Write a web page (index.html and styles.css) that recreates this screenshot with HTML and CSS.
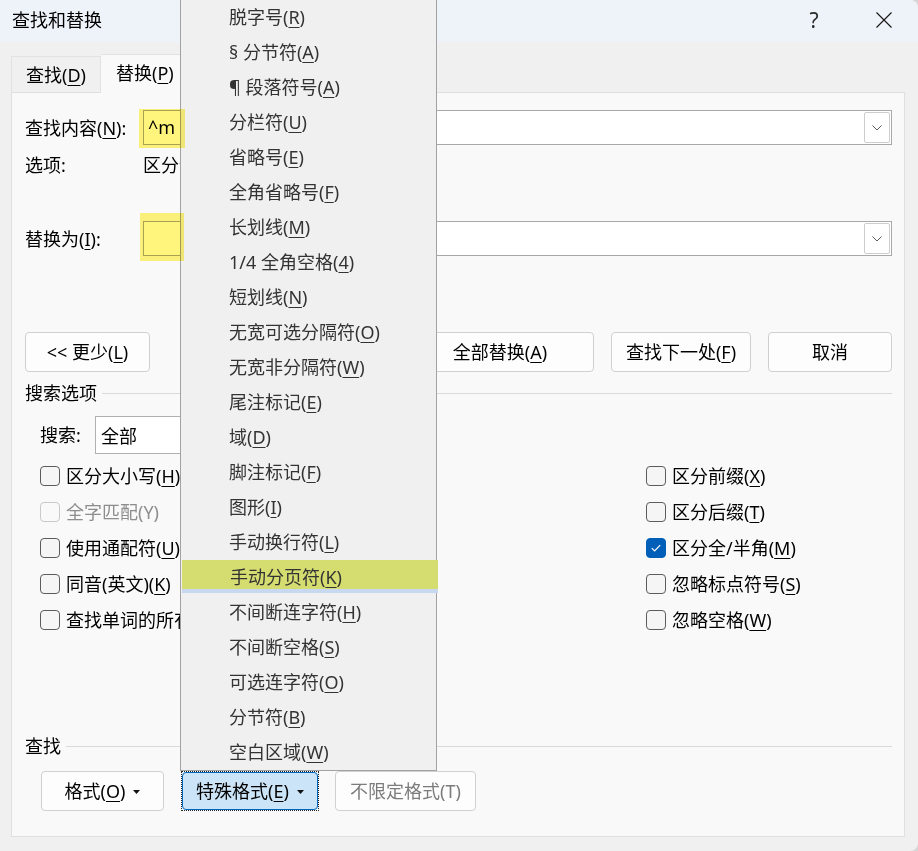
FILE: index.html
```html
<!DOCTYPE html>
<html lang="zh-CN">
<head>
<meta charset="utf-8">
<title>查找和替换</title>
<link rel="stylesheet" href="styles.css">
</head>
<body>
<div class="window">
  <header class="titlebar">
    <span class="title">查找和替换</span>
    <div class="caption">
      <span class="cap-btn help">?</span>
      <span class="cap-btn close">
        <svg width="16" height="16" viewBox="0 0 16 16"><path d="M0.5 0.5 L15.5 15.5 M15.5 0.5 L0.5 15.5" stroke="#1a1a1a" stroke-width="1.2" fill="none"/></svg>
      </span>
    </div>
  </header>

  <div class="tabs">
    <div class="tab">查找(<u>D</u>)</div>
    <div class="tab active">替换(<u>P</u>)</div>
  </div>

  <section class="panel">
    <div class="field-row">
      <span class="field-label">查找内容(<u>N</u>):</span>
      <div class="combo">
        <span class="combo-text">^m</span>
        <span class="combo-btn"><svg width="10" height="6" viewBox="0 0 10 6"><path d="M0.5 0.5 L5 5 L9.5 0.5" stroke="#5a5a5a" stroke-width="1" fill="none"/></svg></span>
      </div>
    </div>

    <div class="opt-row">
      <span class="field-label">选项:</span>
      <span class="opt-value">区分全/半角</span>
    </div>

    <div class="field-row replace-row">
      <span class="field-label">替换为(<u>I</u>):</span>
      <div class="combo">
        <span class="combo-text"></span>
        <span class="combo-btn"><svg width="10" height="6" viewBox="0 0 10 6"><path d="M0.5 0.5 L5 5 L9.5 0.5" stroke="#5a5a5a" stroke-width="1" fill="none"/></svg></span>
      </div>
    </div>

    <div class="btn-row">
      <button class="btn btn-less">&lt;&lt; 更少(<u>L</u>)</button>
      <div class="btn-group">
        <button class="btn btn-all">全部替换(<u>A</u>)</button>
        <button class="btn btn-std">查找下一处(<u>F</u>)</button>
        <button class="btn btn-cancel">取消</button>
      </div>
    </div>

    <div class="group-head">搜索选项</div>

    <div class="search-row">
      <span class="search-label">搜索:</span>
      <div class="select">
        <span>全部</span>
        <svg width="10" height="6" viewBox="0 0 10 6"><path d="M0.5 0.5 L5 5 L9.5 0.5" stroke="#5a5a5a" stroke-width="1" fill="none"/></svg>
      </div>
    </div>

    <div class="checks">
      <label class="check clip"><span class="box"></span><span class="lbl">区分大小写(<u>H</u>)</span></label>
      <label class="check clip disabled"><span class="box"></span><span class="lbl">全字匹配(Y)</span></label>
      <label class="check clip"><span class="box"></span><span class="lbl">使用通配符(<u>U</u>)</span></label>
      <label class="check clip"><span class="box"></span><span class="lbl">同音(英文)(<u>K</u>)</span></label>
      <label class="check clip"><span class="box"></span><span class="lbl">查找单词的所有形式(英文)(<u>W</u>)</span></label>
      <label class="check"><span class="box"></span><span class="lbl">区分前缀(<u>X</u>)</span></label>
      <label class="check"><span class="box"></span><span class="lbl">区分后缀(<u>T</u>)</span></label>
      <label class="check checked"><span class="box"><svg width="20" height="20" viewBox="0 0 20 20"><path d="M5.8 10.2 L8.6 13 L14.2 7.2" stroke="#fff" stroke-width="1.2" fill="none"/></svg></span><span class="lbl">区分全/半角(<u>M</u>)</span></label>
      <label class="check"><span class="box"></span><span class="lbl">忽略标点符号(<u>S</u>)</span></label>
      <label class="check"><span class="box"></span><span class="lbl">忽略空格(<u>W</u>)</span></label>
    </div>

    <div class="group-head find-head">查找</div>

    <div class="bottom-row">
      <button class="btn btn-format">格式(<u>O</u>)<svg class="caret" width="7" height="4" viewBox="0 0 7 4"><path d="M0 0 H7 L3.5 4 Z" fill="#111"/></svg></button>
      <span class="focus-ring">
        <button class="btn btn-special">特殊格式(<u>E</u>)<svg class="caret" width="7" height="4" viewBox="0 0 7 4"><path d="M0 0 H7 L3.5 4 Z" fill="#111"/></svg></button>
      </span>
      <button class="btn btn-noformat" disabled>不限定格式(T)</button>
    </div>
  </section>

  <ul class="menu">
    <li>脱字号(<u>R</u>)</li>
    <li>§ 分节符(<u>A</u>)</li>
    <li>¶ 段落符号(<u>A</u>)</li>
    <li>分栏符(<u>U</u>)</li>
    <li>省略号(<u>E</u>)</li>
    <li>全角省略号(<u>F</u>)</li>
    <li>长划线(<u>M</u>)</li>
    <li>1/4 全角空格(<u>4</u>)</li>
    <li>短划线(<u>N</u>)</li>
    <li>无宽可选分隔符(<u>O</u>)</li>
    <li>无宽非分隔符(<u>W</u>)</li>
    <li>尾注标记(<u>E</u>)</li>
    <li>域(<u>D</u>)</li>
    <li>脚注标记(<u>F</u>)</li>
    <li>图形(<u>I</u>)</li>
    <li>手动换行符(<u>L</u>)</li>
    <li class="current">手动分页符(<u>K</u>)</li>
    <li>不间断连字符(<u>H</u>)</li>
    <li>不间断空格(<u>S</u>)</li>
    <li>可选连字符(<u>O</u>)</li>
    <li>分节符(<u>B</u>)</li>
    <li>空白区域(<u>W</u>)</li>
  </ul>

  <div class="marker marker-find"></div>
  <div class="marker marker-replace"></div>
</div>
</body>
</html>
```

FILE: styles.css
```css
* { box-sizing: border-box; }

html, body {
  margin: 0;
  padding: 0;
  background: #d6d6d6;
}

body {
  font-family: "Noto Sans", "Noto Sans CJK SC", sans-serif;
  font-size: 18px;
  color: #000;
}

u {
  text-decoration-thickness: 1px;
  text-underline-offset: 3px;
}

.window {
  position: relative;
  width: 918px;
  height: 851px;
  background: #f0f0f0;
  border-radius: 0 8px 8px 0;
  overflow: hidden;
  display: flex;
  flex-direction: column;
}

/* ---- title bar ---- */
.titlebar {
  flex: none;
  height: 42px;
  background: #eef2f9;
  display: flex;
  align-items: center;
  padding-left: 12px;
}

.title {
  flex: 1;
  line-height: 26px;
  margin-top: -2px;
}

.caption {
  display: flex;
  align-items: center;
  gap: 22px;
  margin-right: 10px;
}

.cap-btn {
  width: 48px;
  height: 30px;
  display: flex;
  align-items: center;
  justify-content: center;
}

.help {
  font-family: "Noto Sans", sans-serif;
  font-size: 21px;
  color: #2a2a2a;
  margin-top: -3px;
}

.close { margin-top: -2px; }

/* ---- tabs ---- */
.tabs {
  flex: none;
  height: 50px;
  padding: 12px 0 0 11px;
  display: flex;
  align-items: flex-end;
}

.tab {
  width: 90px;
  height: 36px;
  padding-left: 14px;
  display: flex;
  align-items: center;
  border: 1px solid #e2e2e2;
  border-bottom: none;
  background: #f0f0f0;
  line-height: 26px;
}

.tab.active {
  position: relative;
  z-index: 1;
  height: 39px;
  margin-bottom: -1px;
  padding-left: 15px;
  padding-bottom: 2px;
  background: #f9f9f9;
  border-left: none;
}

/* ---- main panel ---- */
.panel {
  flex: 1;
  margin: 0 13px 14px 11px;
  border: 1px solid #e0e0e0;
  background: #f9f9f9;
  padding: 17px 12px 0 13px;
  display: flex;
  flex-direction: column;
}

.field-row {
  display: flex;
  align-items: center;
  height: 35px;
}

.field-label {
  width: 118px;
  flex: none;
  line-height: 26px;
}

.combo {
  flex: 1;
  height: 35px;
  border: 1px solid #a8a8a8;
  background: #fff;
  display: flex;
  align-items: stretch;
}

.combo-text {
  flex: 1;
  padding-left: 4px;
  line-height: 33px;
}

.combo-btn {
  width: 26px;
  margin: 1px 1px 1px 0;
  border: 1px solid #cdcdcd;
  border-radius: 2px;
  display: flex;
  align-items: center;
  justify-content: center;
}

.opt-row {
  display: flex;
  align-items: center;
  height: 26px;
  margin-top: 7px;
  line-height: 26px;
}

/* the value runs on beneath the open menu */
.opt-value {
  width: 37px;
  overflow: hidden;
  white-space: nowrap;
}

.replace-row { margin-top: 43px; }

/* ---- buttons ---- */
.btn {
  height: 40px;
  padding: 0;
  border: 1px solid #d0d0d0;
  border-radius: 4px;
  background: #fdfdfd;
  font: inherit;
  color: #000;
  display: inline-flex;
  align-items: center;
  justify-content: center;
  line-height: 26px;
}

.btn-row {
  display: flex;
  justify-content: space-between;
  margin-top: 76px;
}

.btn-less { width: 125px; }

.btn-group {
  display: flex;
  gap: 17px;
}

.btn-std { width: 140px; }
.btn-all { width: 188px; }
.btn-cancel { width: 124px; }

/* ---- group headings ---- */
.group-head {
  display: flex;
  align-items: center;
  gap: 5px;
  height: 26px;
  line-height: 26px;
  margin-top: 8px;
}

.group-head::after {
  content: "";
  flex: 1;
  height: 1px;
  background: #dadada;
}

.find-head { margin-top: 95px; }

/* ---- search scope ---- */
.search-row {
  display: flex;
  align-items: center;
  margin-top: 10px;
  height: 38px;
}

.search-label {
  width: 55px;
  margin-left: 15px;
  line-height: 26px;
}

.select {
  width: 180px;
  height: 38px;
  border: 1px solid #b0b0b0;
  background: #fff;
  display: flex;
  align-items: center;
  justify-content: space-between;
  padding: 0 10px 0 5px;
}

/* ---- checkboxes ---- */
.checks {
  margin-top: 4px;
  margin-left: 15px;
  display: grid;
  grid-template-columns: 606px 1fr;
  grid-template-rows: repeat(5, 36px);
  grid-auto-flow: column;
}

.check {
  display: flex;
  align-items: center;
  gap: 6px;
  white-space: nowrap;
  line-height: 26px;
}

/* left column labels run on beneath the open menu */
.check.clip {
  width: 140px;
  overflow: hidden;
}

.box {
  width: 20px;
  height: 20px;
  flex: none;
  border: 1px solid #5c5c5c;
  border-radius: 4px;
  background: #f5f5f5;
  display: flex;
  align-items: center;
  justify-content: center;
}

.box svg { display: block; margin: -1px; }

.check.disabled { color: #8d8d8d; }
.check.disabled .box { border-color: #c9c9c9; background: #f9f9f9; }

.check.checked .box {
  border-color: #005fb8;
  background: #005fb8;
}

/* ---- bottom buttons ---- */
.bottom-row {
  display: flex;
  align-items: center;
  margin-top: 12px;
  margin-left: 16px;
}

.caret { margin-left: 8px; margin-top: 1px; }

.btn-format { width: 123px; }

.focus-ring {
  margin-left: 17px;
  border: 1px dotted #222;
  border-radius: 1px;
  display: flex;
}

.btn-special {
  width: 136px;
  height: 38px;
  background: #cce4f7;
  border-color: #0067c0;
}

.btn-noformat {
  width: 141px;
  margin-left: 16px;
  color: #7b7b7b;
}

/* ---- special characters menu ---- */
.menu {
  position: absolute;
  z-index: 10;
  left: 180px;
  top: -1px;
  width: 257px;
  margin: 0;
  padding: 0;
  list-style: none;
  background: #f0f0f0;
  border: 1px solid #a2a2a2;
  color: #333;
}

.menu li {
  height: 35px;
  padding-left: 48px;
  line-height: 35px;
  white-space: nowrap;
}

.menu li.current {
  margin: 0 -2px 0 1px;
  background: linear-gradient(#d5dc70 0 29px, #c8d8f1 29px 33px, transparent 33px);
}

/* ---- highlighter marks ---- */
.marker {
  position: absolute;
  z-index: 20;
  background: #fff57c;
  mix-blend-mode: multiply;
}

.marker-find {
  left: 139px;
  top: 109px;
  width: 46px;
  height: 39px;
}

.marker-replace {
  left: 140px;
  top: 213px;
  width: 44px;
  height: 48px;
}
```
